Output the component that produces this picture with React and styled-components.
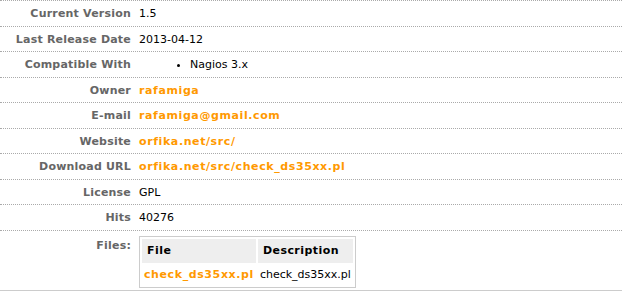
import React from 'react';
import styled, { createGlobalStyle } from 'styled-components';

const GlobalStyle = createGlobalStyle`
    body {
        margin: 0;
        background: #fff;
        font-family: "DejaVu Sans", Verdana, sans-serif;
        font-size: 11px;
        color: #000;
    }
`;

const details = [
    { label: 'Current Version', value: '1.5' },
    { label: 'Last Release Date', value: '2013-04-12' },
    { label: 'Compatible With', list: ['Nagios 3.x'] },
    { label: 'Owner', link: 'rafamiga' },
    { label: 'E-mail', link: 'rafamiga@gmail.com' },
    { label: 'Website', link: 'orfika.net/src/' },
    { label: 'Download URL', link: 'orfika.net/src/check_ds35xx.pl' },
    { label: 'License', value: 'GPL' },
    { label: 'Hits', value: '40276' },
];

export default function App() {
    return (
        <>
            <GlobalStyle />
            <Details>
                {details.map((item, i) => (
                    <Row key={item.label} $odd={i % 2 === 0}>
                        <Label>{item.label}</Label>
                        <Value>
                            {item.value}
                            {item.link && <OrangeLink href="#">{item.link}</OrangeLink>}
                            {item.list && (
                                <Bullets>
                                    {item.list.map(entry => <li key={entry}>{entry}</li>)}
                                </Bullets>
                            )}
                        </Value>
                    </Row>
                ))}
                <FilesRow>
                    <FilesLabel>Files:</FilesLabel>
                    <FileTable>
                        <thead>
                            <tr>
                                <Th>File</Th>
                                <Th>Description</Th>
                            </tr>
                        </thead>
                        <tbody>
                            <tr>
                                <Td><OrangeLink href="#">check_ds35xx.pl</OrangeLink></Td>
                                <Td>check_ds35xx.pl</Td>
                            </tr>
                        </tbody>
                    </FileTable>
                </FilesRow>
            </Details>
        </>
    );
}

const Details = styled.div`
    border-top: 1px dotted #aaa;
    border-bottom: 1px solid #ccc;
`;

const Row = styled.div`
    display: grid;
    grid-template-columns: 131px 1fr;
    column-gap: 8px;
    align-items: center;
    height: ${props => (props.$odd ? '25px' : '24px')};
    border-bottom: 1px dotted #aaa;
`;

const Label = styled.div`
    text-align: right;
    font-weight: bold;
    letter-spacing: 0.2px;
    color: #666;
`;

const Value = styled.div`
    color: #000;
`;

const OrangeLink = styled.a`
    color: #f90;
    font-weight: bold;
    letter-spacing: 0.6px;
    text-decoration: none;
`;

const Bullets = styled.ul`
    margin: 0;
    padding-left: 51px;
    list-style: disc;
`;

const FilesRow = styled.div`
    display: grid;
    grid-template-columns: 131px 1fr;
    column-gap: 8px;
    align-items: start;
    padding: 5px 0 2px;
`;

const FilesLabel = styled(Label)`
    padding-top: 3px;
`;

const FileTable = styled.table`
    justify-self: start;
    border: 1px solid #ccc;
    border-spacing: 2px;
    font-size: 11px;
`;

const Th = styled.th`
    background: #eee;
    text-align: left;
    font-weight: bold;
    letter-spacing: 0.45px;
    padding: 5px;
    line-height: 14px;
`;

const Td = styled.td`
    padding: 3px 2px 3px 2px;
    line-height: 14px;
`;
